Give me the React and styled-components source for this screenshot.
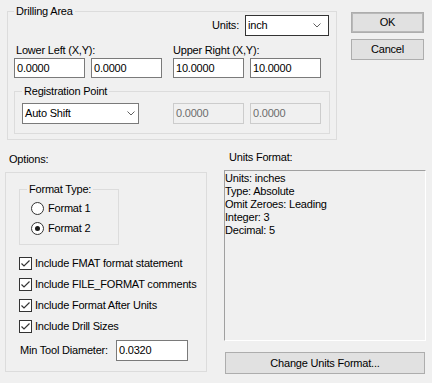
import React from 'react';
import styled, { createGlobalStyle } from 'styled-components';

const Global = createGlobalStyle`
  html, body { margin: 0; padding: 0; background: #f0f0f0; }
  body { font-family: "Liberation Sans", Arial, sans-serif; font-size: 11px; line-height: 13px; letter-spacing: -0.2px; color: #000; }
  #root { width: 432px; height: 383px; overflow: hidden; }
  * { box-sizing: border-box; }
`;

const Dialog = styled.div`
  width: 432px;
  height: 383px;
  display: flex;
  flex-direction: column;
`;

const TopRow = styled.div`
  display: flex;
  align-items: flex-start;
  padding-left: 7px;
`;

const BottomRow = styled.div`
  display: flex;
  align-items: flex-start;
  padding-left: 5px;
`;

const Group = styled.fieldset`
  margin: ${p => p.$margin || '0'};
  padding: 0;
  border: 1px solid #dcdcdc;
  width: ${p => p.$w}px;
  min-width: 0;
`;

const Legend = styled.legend`
  padding: 0 2px;
  margin-left: ${p => p.$indent}px;
  line-height: 13px;
  font-size: 11px;
`;

const Body = styled.div`
  padding: ${p => p.$pad};
  display: flex;
  flex-direction: column;
`;

const UnitsRow = styled.div`
  display: flex;
  justify-content: flex-end;
  align-items: center;
  gap: 6px;
  margin-top: -3px;
  margin-right: 1px;
  height: 21px;
`;

const Label = styled.div`
  line-height: 13px;
  white-space: nowrap;
  padding-left: ${p => p.$indent || 0}px;
  margin-top: ${p => p.$top || 0}px;
`;

const Coords = styled.div`
  display: flex;
  gap: 11px;
  margin-top: 8px;
`;

const CoordGroup = styled.div`
  display: flex;
  flex-direction: column;
  gap: 1px;
`;

const Pair = styled.div`
  display: flex;
  gap: 6px;
  margin-left: ${p => p.$left || 0}px;
`;

const Input = styled.div`
  width: ${p => p.$w || 71}px;
  height: ${p => p.$h || 20}px;
  border: 1px solid ${p => (p.$disabled ? '#cccccc' : '#7a7a7a')};
  background: ${p => (p.$disabled ? '#f0f0f0' : '#ffffff')};
  color: ${p => (p.$disabled ? '#6d6d6d' : '#000')};
  padding: 0 2px;
  display: flex;
  align-items: center;
  white-space: nowrap;
`;

const Select = styled.div`
  width: ${p => p.$w}px;
  height: 21px;
  border: 1px solid ${p => p.$dark ? '#333333' : '#7a7a7a'};
  background: #fff;
  padding: 0 ${p => p.$chev}px 0 2px;
  display: flex;
  align-items: center;
  justify-content: space-between;
`;

const Chevron = () => (
  <svg width="8" height="5" viewBox="0 0 8 5">
    <path d="M0.5 0.5 L4 4 L7.5 0.5" fill="none" stroke="#606060" strokeWidth="1" />
  </svg>
);

const RegRow = styled.div`
  display: flex;
  align-items: center;
`;

const ButtonCol = styled.div`
  display: flex;
  flex-direction: column;
  gap: 6px;
  margin-left: 14px;
  margin-top: 12px;
`;

const Button = styled.div`
  width: ${p => p.$w}px;
  height: ${p => p.$h || 21}px;
  background: #e1e1e1;
  border: 1px solid #adadad;
  box-shadow: ${p => (p.$default ? 'inset 0 0 0 1px #b9b9b9' : 'none')};
  display: flex;
  align-items: center;
  justify-content: center;
  margin-left: ${p => p.$left || 0}px;
  margin-top: ${p => p.$top || 0}px;
`;

const Column = styled.div`
  display: flex;
  flex-direction: column;
  width: 202px;
  margin-left: ${p => p.$left || 0}px;
`;

const OptionsBox = styled.div`
  margin-top: 6px;
  height: 200px;
  border: 1px solid #dcdcdc;
  padding: 10px 0 0 13px;
  display: flex;
  flex-direction: column;
`;

const RadioRow = styled.div`
  display: flex;
  align-items: center;
  gap: 4px;
  height: 20px;
`;

const Radio = styled.span`
  width: 13px;
  height: 13px;
  border-radius: 50%;
  border: 1px solid #333;
  background: #fff;
  display: flex;
  align-items: center;
  justify-content: center;
  &::after {
    content: '';
    width: 5px;
    height: 5px;
    border-radius: 50%;
    background: ${p => (p.$on ? '#1a1a1a' : 'transparent')};
  }
`;

const CheckList = styled.div`
  display: flex;
  flex-direction: column;
  margin-top: 8px;
`;

const CheckRow = styled.div`
  display: flex;
  align-items: center;
  gap: 3px;
  height: 21px;
  white-space: nowrap;
`;

const Box = styled.span`
  width: 13px;
  height: 13px;
  border: 1px solid #333;
  background: #fff;
  display: flex;
  align-items: center;
  justify-content: center;
`;

const Check = () => (
  <Box>
    <svg width="11" height="11" viewBox="0 0 11 11">
      <path d="M1.5 5.5 L4 8 L9.5 2.5" fill="none" stroke="#333" strokeWidth="1.2" />
    </svg>
  </Box>
);

const MinRow = styled.div`
  display: flex;
  align-items: center;
  margin-top: 3px;
  padding-left: 1px;
`;

const MinLabel = styled.span`
  width: 96px;
  white-space: nowrap;
`;

const FormatText = styled.div`
  margin-top: 6px;
  height: 171px;
  border-style: solid;
  border-width: 1px;
  border-color: #a0a0a0 #ffffff #ffffff #a0a0a0;
  padding: 1px 0 0 0;
  line-height: 13px;
  white-space: pre;
`;

const checks = [
  'Include FMAT format statement',
  'Include FILE_FORMAT comments',
  'Include Format After Units',
  'Include Drill Sizes',
];

export default function App() {
  return (
    <Dialog>
      <Global />
      <TopRow>
        <Group $w={330} $margin="5px 0 0 0">
          <Legend $indent={6}>Drilling Area</Legend>
          <Body $pad="0 6px 5px 6px">
            <UnitsRow>
              <span>Units:</span>
              <Select $w={84} $dark $chev={7}>
                <span>inch</span>
                <Chevron />
              </Select>
            </UnitsRow>
            <Coords>
              <CoordGroup>
                <Label $indent={2}>Lower Left (X,Y):</Label>
                <Pair>
                  <Input>0.0000</Input>
                  <Input>0.0000</Input>
                </Pair>
              </CoordGroup>
              <CoordGroup>
                <Label>Upper Right (X,Y):</Label>
                <Pair>
                  <Input>10.0000</Input>
                  <Input>10.0000</Input>
                </Pair>
              </CoordGroup>
            </Coords>
            <Group $w={316} $margin="7px 0 0 0">
              <Legend $indent={7}>Registration Point</Legend>
              <Body $pad="5px 0 9px 7px">
                <RegRow>
                  <Select $w={117} $chev={3}>
                    <span>Auto Shift</span>
                    <Chevron />
                  </Select>
                  <Pair $left={34}>
                    <Input $disabled $h={21}>0.0000</Input>
                    <Input $disabled $h={21}>0.0000</Input>
                  </Pair>
                </RegRow>
              </Body>
            </Group>
          </Body>
        </Group>
        <ButtonCol>
          <Button $w={73} $default>OK</Button>
          <Button $w={73}>Cancel</Button>
        </ButtonCol>
      </TopRow>
      <BottomRow>
        <Column>
          <Label $indent={4} $top={13}>Options:</Label>
          <OptionsBox>
            <Group $w={100}>
              <Legend $indent={7}>Format Type:</Legend>
              <Body $pad="2px 0 6px 11px">
                <RadioRow>
                  <Radio />
                  <span>Format 1</span>
                </RadioRow>
                <RadioRow>
                  <Radio $on />
                  <span>Format 2</span>
                </RadioRow>
              </Body>
            </Group>
            <CheckList>
              {checks.map(c => (
                <CheckRow key={c}>
                  <Check />
                  <span>{c}</span>
                </CheckRow>
              ))}
            </CheckList>
            <MinRow>
              <MinLabel>Min Tool Diameter:</MinLabel>
              <Input $w={72} $h={21}>0.0320</Input>
            </MinRow>
          </OptionsBox>
        </Column>
        <Column $left={17}>
          <Label $indent={5} $top={11}>Units Format:</Label>
          <FormatText>{'Units: inches\nType: Absolute\nOmit Zeroes: Leading\nInteger: 3\nDecimal: 5'}</FormatText>
          <Button $w={200} $h={22} $left={1} $top={11}>Change Units Format...</Button>
        </Column>
      </BottomRow>
    </Dialog>
  );
}
